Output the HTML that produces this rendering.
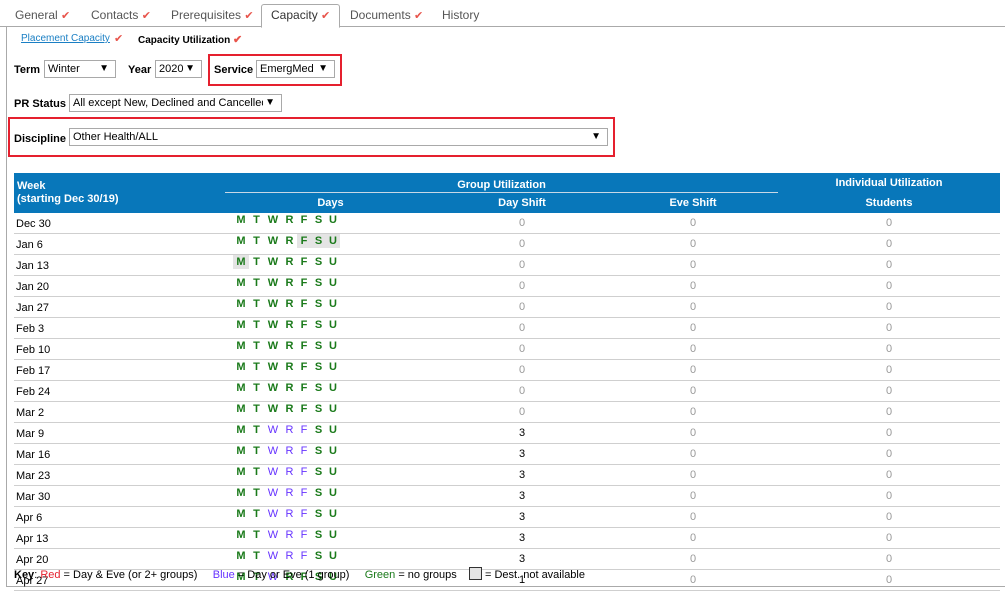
<!DOCTYPE html>
<html><head><style>
body{margin:0;width:1005px;height:594px;font-family:"Liberation Sans",Arial,sans-serif;font-size:11px;color:#000;background:#fff;position:relative;overflow:hidden}
.a{position:absolute;white-space:nowrap}
.ck{color:#e8534a;font-size:11px}
.tab{position:absolute;top:5px;height:20px;line-height:20px;color:#555;font-size:12px}
.sel{border:1px solid #a9a9a9;height:18px;line-height:16px;padding-left:3px;box-sizing:border-box;background:#fff;position:absolute;white-space:nowrap;overflow:hidden;font-size:11px}
.sel b{position:absolute;right:6px;top:0;font-size:10px}
.red{position:absolute;border:2px solid #e5202e}
table{position:absolute;left:14px;top:173px;width:986px;border-collapse:collapse;table-layout:fixed}
td{height:18px;border-bottom:1px solid #cfcfcf;padding:0;font-size:11px}
.g{color:#999;text-align:center}
.d span{display:inline-block;font-weight:bold;color:#1a7a1a;text-align:center}
.d .b{color:#6633ff;font-weight:normal}
.d .x{background:#e4e4e4}
</style></head><body>
<div class="a" style="left:0;top:26px;width:1005px;border-top:1px solid #aaa"></div>
<div class="a" style="left:6px;top:26px;width:1px;height:561px;background:#aaa"></div>
<div class="a" style="left:6px;top:586px;width:999px;height:1px;background:#aaa"></div>
<div class="tab" style="left:15px">General <span class="ck">✔</span></div>
<div class="tab" style="left:91px">Contacts <span class="ck">✔</span></div>
<div class="tab" style="left:171px">Prerequisites <span class="ck">✔</span></div>
<div class="a" style="left:261px;top:4px;width:77px;height:22px;border:1px solid #aaa;border-bottom:1px solid #fff;border-radius:3px 3px 0 0;background:#fff"></div>
<div class="tab" style="left:271px;color:#333">Capacity <span class="ck">✔</span></div>
<div class="tab" style="left:350px">Documents <span class="ck">✔</span></div>
<div class="tab" style="left:442px">History</div>
<div class="a" style="left:21px;top:33px;font-size:10px;color:#1a7fc4;text-decoration:underline">Placement Capacity </div><div class="a ck" style="left:114px;top:32px">✔</div>
<div class="a" style="left:138px;top:33px;font-size:10px;font-weight:bold">Capacity Utilization <span class="ck">✔</span></div>
<div class="a" style="left:14px;top:64px;font-weight:bold">Term</div>
<div class="sel" style="left:44px;top:60px;width:72px">Winter<b>▼</b></div>
<div class="a" style="left:128px;top:64px;font-weight:bold">Year</div>
<div class="sel" style="left:155px;top:60px;width:47px">2020<b>▼</b></div>
<div class="red" style="left:208px;top:54px;width:130px;height:28px"></div>
<div class="a" style="left:214px;top:64px;font-weight:bold">Service</div>
<div class="sel" style="left:256px;top:60px;width:79px">EmergMed<b>▼</b></div>
<div class="a" style="left:14px;top:98px;font-weight:bold">PR Status</div>
<div class="sel" style="left:69px;top:94px;width:213px">All except New, Declined and Cancelled<b style="background:#fff;padding-left:2px">▼</b></div>
<div class="red" style="left:8px;top:117px;width:603px;height:36px"></div>
<div class="a" style="left:14px;top:133px;font-weight:bold">Discipline</div>
<div class="sel" style="left:69px;top:128px;width:539px">Other Health/ALL<b>▼</b></div>
<table id="t">
<colgroup><col style="width:211px"><col style="width:211px"><col style="width:172px"><col style="width:170px"><col></colgroup>
<tr style="background:#0877ba;color:#fff;font-weight:bold"><td rowspan="2" style="padding-left:3px;line-height:13px;border:0;vertical-align:top;padding-top:7px">Week<br>(starting Dec 30/19)</td><td colspan="3" style="height:20px;text-align:center;border:0;vertical-align:bottom"><div style="border-bottom:1px solid #c8d8e6;width:553px;padding-bottom:1px">Group Utilization</div></td><td style="text-align:center;border:0">Individual Utilization</td></tr>
<tr style="background:#0877ba;color:#fff;font-weight:bold;text-align:center"><td style="border:0;height:20px">Days</td><td style="border:0">Day Shift</td><td style="border:0">Eve Shift</td><td style="border:0">Students</td></tr>
</table>
<script>
var w=["Dec 30","Jan 6","Jan 13","Jan 20","Jan 27","Feb 3","Feb 10","Feb 17","Feb 24","Mar 2","Mar 9","Mar 16","Mar 23","Mar 30","Apr 6","Apr 13","Apr 20","Apr 27"];
var L=["M","T","W","R","F","S","U"],W=[16,15,18,15,14,15,14];
var h="";
w.forEach(function(n,i){
var d='<td class="d" style="padding-left:8px;vertical-align:top;line-height:14px">';
L.forEach(function(l,j){var c="";if(i>=10&&(j==2||((j==3||j==4)&&i<17)))c="b";if((i==1&&j>=4)||(i==2&&j==0))c+=" x";d+='<span class="'+c+'" style="width:'+W[j]+'px">'+l+'</span>';});
d+='</td>';
var ds=i<10?'<td class="g">0</td>':'<td style="text-align:center">'+(i==17?1:3)+'</td>';
h+='<tr><td style="padding-left:2px;padding-top:2px">'+n+'</td>'+d+ds+'<td class="g">0</td><td class="g">0</td></tr>';});
document.getElementById("t").insertAdjacentHTML("beforeend",h);
</script>
<div class="a" style="left:14px;top:567px;font-size:11px"><b>Key</b>: <span style="color:#e5202e">Red</span> = Day &amp; Eve (or 2+ groups) &nbsp; &nbsp; <span style="color:#6633ff">Blue</span> = Day or Eve (1 group) &nbsp; &nbsp; <span style="color:#1a7a1a">Green</span> = no groups &nbsp; &nbsp;<span style="display:inline-block;width:11px;height:11px;border:1px solid #333;background:#e4e4e4;vertical-align:-2px"></span> = Dest. not available</div>
</body></html>
